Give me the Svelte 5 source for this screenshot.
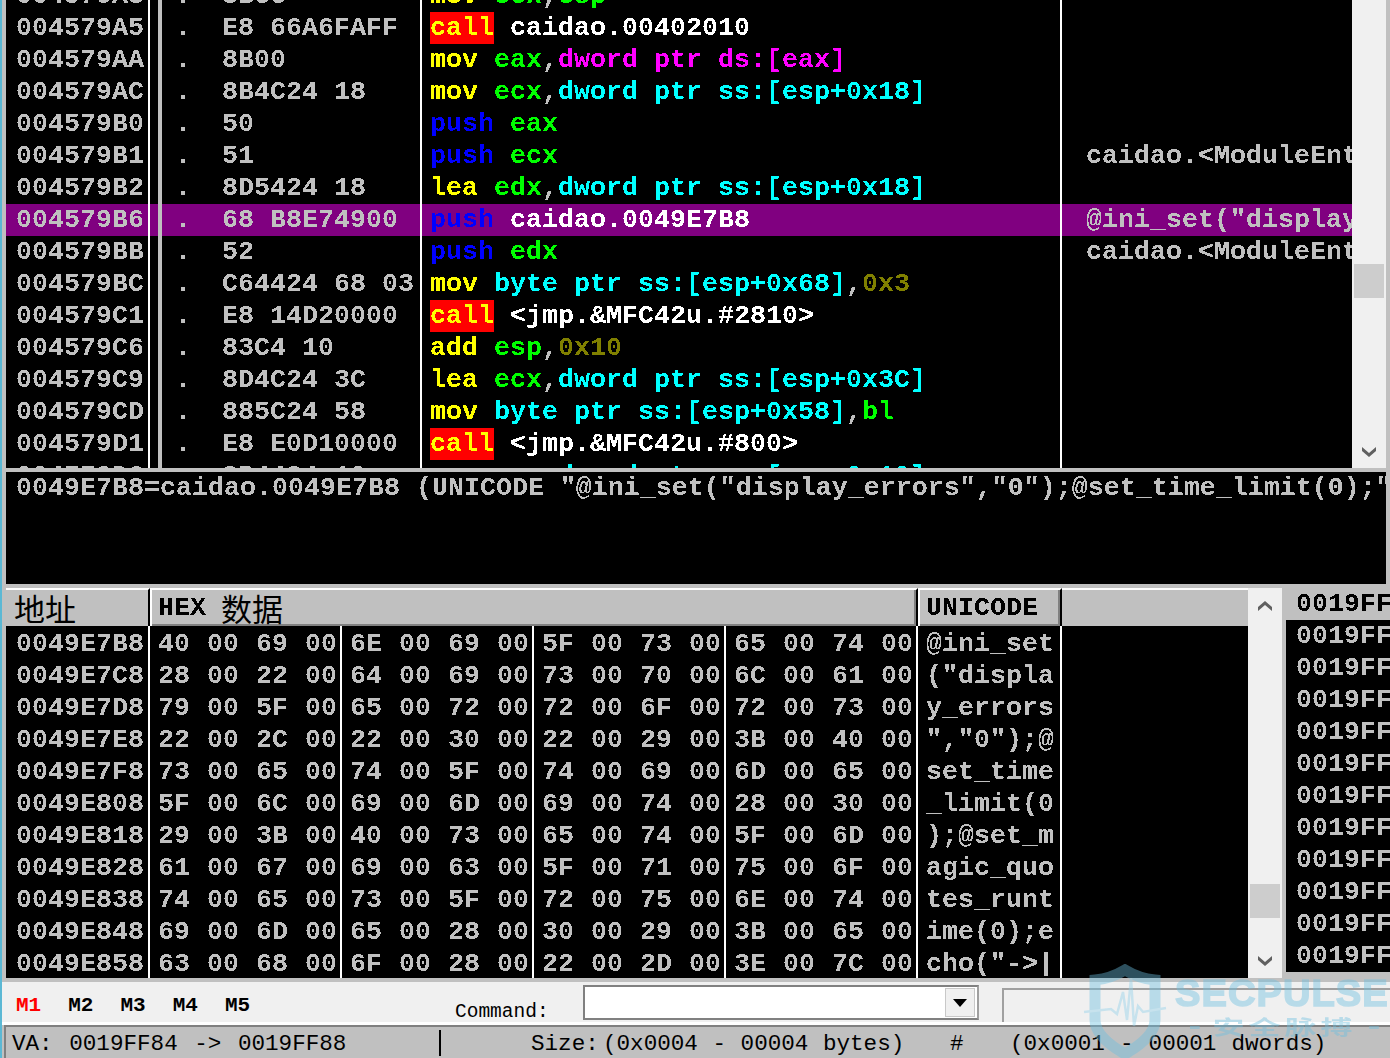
<script>
  const Y = "mn", B = "psh", G = "reg", C = "mem", M = "memd", O = "imm", S = "sep", W = "tgt";

  const asm = [
    { addr: "004579A3", hex: "8BCC", code: [["mov", Y], [" "], ["ecx", G], [",", S], ["esp", G]] },
    { addr: "004579A5", hex: "E8 66A6FAFF", call: true, code: [["caidao.00402010", W]] },
    { addr: "004579AA", hex: "8B00", code: [["mov", Y], [" "], ["eax", G], [",", S], ["dword ptr ds:[eax]", M]] },
    { addr: "004579AC", hex: "8B4C24 18", code: [["mov", Y], [" "], ["ecx", G], [",", S], ["dword ptr ss:[esp+0x18]", C]] },
    { addr: "004579B0", hex: "50", code: [["push", B], [" "], ["eax", G]] },
    { addr: "004579B1", hex: "51", code: [["push", B], [" "], ["ecx", G]], note: "caidao.<ModuleEntryPoint>" },
    { addr: "004579B2", hex: "8D5424 18", code: [["lea", Y], [" "], ["edx", G], [",", S], ["dword ptr ss:[esp+0x18]", C]] },
    { addr: "004579B6", hex: "68 B8E74900", sel: true, code: [["push", B], [" "], ["caidao.0049E7B8", W]], note: "@ini_set(\"display_errors\",\"0\")" },
    { addr: "004579BB", hex: "52", code: [["push", B], [" "], ["edx", G]], note: "caidao.<ModuleEntryPoint>" },
    { addr: "004579BC", hex: "C64424 68 03", code: [["mov", Y], [" "], ["byte ptr ss:[esp+0x68]", C], [",", S], ["0x3", O]] },
    { addr: "004579C1", hex: "E8 14D20000", call: true, code: [["<jmp.&MFC42u.#2810>", W]] },
    { addr: "004579C6", hex: "83C4 10", code: [["add", Y], [" "], ["esp", G], [",", S], ["0x10", O]] },
    { addr: "004579C9", hex: "8D4C24 3C", code: [["lea", Y], [" "], ["ecx", G], [",", S], ["dword ptr ss:[esp+0x3C]", C]] },
    { addr: "004579CD", hex: "885C24 58", code: [["mov", Y], [" "], ["byte ptr ss:[esp+0x58]", C], [",", S], ["bl", G]] },
    { addr: "004579D1", hex: "E8 E0D10000", call: true, code: [["<jmp.&MFC42u.#800>", W]] },
    { addr: "004579D6", hex: "8B4424 10", code: [["mov", Y], [" "], ["eax", G], [",", S], ["dword ptr ss:[esp+0x10]", C]] }
  ];

  const dump = [
    ["0049E7B8", "40 00 69 00", "6E 00 69 00", "5F 00 73 00", "65 00 74 00", "@ini_set"],
    ["0049E7C8", "28 00 22 00", "64 00 69 00", "73 00 70 00", "6C 00 61 00", "(\"displa"],
    ["0049E7D8", "79 00 5F 00", "65 00 72 00", "72 00 6F 00", "72 00 73 00", "y_errors"],
    ["0049E7E8", "22 00 2C 00", "22 00 30 00", "22 00 29 00", "3B 00 40 00", "\",\"0\");@"],
    ["0049E7F8", "73 00 65 00", "74 00 5F 00", "74 00 69 00", "6D 00 65 00", "set_time"],
    ["0049E808", "5F 00 6C 00", "69 00 6D 00", "69 00 74 00", "28 00 30 00", "_limit(0"],
    ["0049E818", "29 00 3B 00", "40 00 73 00", "65 00 74 00", "5F 00 6D 00", ");@set_m"],
    ["0049E828", "61 00 67 00", "69 00 63 00", "5F 00 71 00", "75 00 6F 00", "agic_quo"],
    ["0049E838", "74 00 65 00", "73 00 5F 00", "72 00 75 00", "6E 00 74 00", "tes_runt"],
    ["0049E848", "69 00 6D 00", "65 00 28 00", "30 00 29 00", "3B 00 65 00", "ime(0);e"],
    ["0049E858", "63 00 68 00", "6F 00 28 00", "22 00 2D 00", "3E 00 7C 00", "cho(\"->|"]
  ];

  const stackRows = Array(11).fill("0019FF88");
  const tabs = ["M1", "M2", "M3", "M4", "M5"];
</script>

<svg class="defs" width="0" height="0" aria-hidden="true">
  <filter id="px" x="-2%" y="-5%" width="104%" height="110%" color-interpolation-filters="sRGB">
    <feComponentTransfer>
      <feFuncA type="discrete" tableValues="0 1" />
    </feComponentTransfer>
  </filter>
</svg>

<div class="app">
  <div class="strip"></div>
  <div class="window">
    <div class="top">
      <div class="disasm">
        <div class="asm-list">
          {#each asm as row}
            <div class="asm-row" class:sel={row.sel}>
              <div class="c-addr"><span class="px">{row.addr}</span></div>
              <div class="c-gutter"></div>
              <div class="c-hex"><span class="px dot">.</span><span class="px">{row.hex}</span></div>
              <div class="c-asm">{#if row.call}<span class="call"><span class="px mn">call</span></span><span class="gap"></span>{/if}{#each row.code as t}<span class="px {t[1] || ''}">{t[0]}</span>{/each}</div>
              <div class="c-note"><span class="px">{row.note || ""}</span></div>
            </div>
          {/each}
        </div>
      </div>
      <div class="vscroll">
        <div class="thumb t1"></div>
        <svg class="arrow" width="16" height="12" viewBox="0 0 16 12"><path d="M1 1 L8 7 L15 1 L15 5 L8 11 L1 5 Z" fill="#606060" /></svg>
      </div>
    </div>

    <div class="info"><span class="px">0049E7B8=caidao.0049E7B8 (UNICODE "@ini_set("display_errors","0");@set_time_limit(0);"</span></div>

    <div class="lower">
      <div class="dump">
        <div class="dump-head">
          <div class="h-cell h-addr"><span class="cjk">地址</span></div>
          <div class="h-cell h-hex"><span class="px">HEX</span><span class="cjk">数据</span></div>
          <div class="h-cell h-uni"><span class="px">UNICODE</span></div>
          <div class="h-rest"></div>
        </div>
        {#each dump as r}
          <div class="dump-row">
            <div class="d-addr"><span class="px">{r[0]}</span></div>
            <div class="d-hex"><span class="px">{r[1]}</span></div>
            <div class="d-hex"><span class="px">{r[2]}</span></div>
            <div class="d-hex"><span class="px">{r[3]}</span></div>
            <div class="d-hex"><span class="px">{r[4]}</span></div>
            <div class="d-uni"><span class="px">{r[5]}</span></div>
          </div>
        {/each}
      </div>
      <div class="vscroll small">
        <svg class="arrow" width="16" height="12" viewBox="0 0 16 12"><path d="M1 7 L8 1 L15 7 L15 11 L8 5 L1 11 Z" fill="#606060" /></svg>
        <div class="thumb t2"></div>
        <svg class="arrow" width="16" height="12" viewBox="0 0 16 12"><path d="M1 1 L8 7 L15 1 L15 5 L8 11 L1 5 Z" fill="#606060" /></svg>
      </div>
      <div class="stack">
        <div class="stack-head"><span class="px">0019FF84</span></div>
        {#each stackRows as s}
          <div class="stack-row"><span class="px">{s}</span></div>
        {/each}
      </div>
    </div>

    <div class="toolbar">
      <div class="tabs">
        {#each tabs as t, i}
          <span class="tab" class:on={i === 0}>{t}</span>
        {/each}
      </div>
      <span class="cmd-label">Command:</span>
      <div class="combo">
        <div class="combo-btn"><svg width="14" height="8" viewBox="0 0 14 8"><path d="M0 0 H14 L7 8 Z" fill="#000" /></svg></div>
      </div>
      <div class="cmd-box"></div>
    </div>

    <div class="status">
      <span class="st-va">VA: 0019FF84 -&gt; 0019FF88</span>
      <span class="st-div"></span>
      <span class="st-size"><span class="st-label">Size:</span>(0x0004 - 00004 bytes)</span>
      <span class="st-hash">#</span>
      <span class="st-dw">(0x0001 - 00001 dwords)</span>
    </div>
  </div>

  <div class="watermark" aria-hidden="true">
    <svg class="shield" width="84" height="94" viewBox="0 0 84 94">
      <path d="M42 6 C52 12 60 15 72 16 V56 C72 70 56 82 42 90 C28 82 12 70 12 56 V16 C24 15 32 12 42 6 Z" fill="none" stroke="#6cbfe0" stroke-width="11" />
      <path d="M1 48 L28 45 L34 50 L40 28 L44 56 L48 14 L51 62 L55 42 L60 48 L83 44" fill="none" stroke="#8fd0ea" stroke-width="2.5" />
    </svg>
    <div class="wm-en">SECPULSE</div>
    <div class="wm-cn"><i></i>安全脉搏<i></i></div>
  </div>
</div>

<style>
  :global(body) {
    margin: 0;
    background: #c0c0c0;
  }

  .defs {
    position: absolute;
  }

  .app {
    position: relative;
    display: flex;
    width: 1390px;
    height: 1058px;
    overflow: hidden;
    font-family: "Liberation Mono", monospace;
    font-size: 26.67px;
    font-weight: 700;
    line-height: 32px;
    color: #c0c0c0;
  }

  .strip {
    width: 2px;
    flex: none;
    background: #5bb8d4;
  }

  .window {
    width: 1388px;
    display: flex;
    flex-direction: column;
    background: #c0c0c0;
  }

  .px {
    filter: url(#px);
    white-space: pre;
  }

  /* disassembler */
  .top {
    display: flex;
    height: 468px;
    margin-left: 4px;
    padding-right: 4px;
  }

  .disasm {
    width: 1346px;
    background: #000;
    overflow: hidden;
  }

  .asm-list {
    margin-top: -20px;
  }

  .asm-row {
    display: flex;
    height: 32px;
  }

  .asm-row.sel {
    background: #800080;
  }

  .c-addr {
    width: 144px;
    box-sizing: border-box;
    padding-left: 10px;
    border-right: 2px solid #fff;
  }

  .c-gutter {
    width: 12px;
    box-sizing: border-box;
    border-right: 4px solid #c0c0c0;
  }

  .c-hex {
    width: 260px;
    box-sizing: border-box;
    padding-left: 13px;
    border-right: 2px solid #fff;
  }

  .dot {
    display: inline-block;
    width: 47px;
  }

  .c-asm {
    width: 640px;
    box-sizing: border-box;
    padding-left: 8px;
    border-right: 2px solid #fff;
    color: #fff;
    white-space: nowrap;
  }

  .c-note {
    flex: 1;
    min-width: 0;
    padding-left: 24px;
    overflow: hidden;
    white-space: nowrap;
  }

  .call {
    display: inline-block;
    background: #ff0000;
    height: 32px;
  }

  .gap {
    display: inline-block;
    width: 16px;
  }

  .mn {
    color: #ffff00;
  }

  .psh {
    color: #0000ff;
  }

  .reg {
    color: #00ff00;
  }

  .mem {
    color: #00ffff;
  }

  .memd {
    color: #ff00ff;
  }

  .imm {
    color: #808000;
  }

  .sep {
    color: #c0c0c0;
  }

  .tgt {
    color: #fff;
  }

  /* scrollbars */
  .vscroll {
    width: 34px;
    flex: none;
    display: flex;
    flex-direction: column;
    align-items: center;
    background: #f0f0f0;
  }

  .thumb {
    width: 30px;
    height: 34px;
    flex: none;
    background: #cdcdcd;
  }

  .t1 {
    margin-top: 264px;
    margin-bottom: 148px;
  }

  .vscroll.small .arrow:first-child {
    margin-top: 12px;
  }

  .t2 {
    margin-top: 272px;
    margin-bottom: 37px;
  }

  /* info pane */
  .info {
    height: 112px;
    margin: 4px;
    padding-left: 10px;
    background: #000;
    overflow: hidden;
    white-space: nowrap;
  }

  /* dump */
  .lower {
    display: flex;
    height: 390px;
    margin-left: 4px;
  }

  .dump {
    width: 1242px;
    flex: none;
  }

  .dump-head {
    display: flex;
    height: 38px;
    color: #000;
  }

  .h-cell {
    box-sizing: border-box;
    display: flex;
    align-items: center;
    height: 38px;
    border-top: 2px solid #fff;
  }

  .h-addr {
    width: 144px;
    padding-left: 8px;
    border-right: 2px solid #000;
  }

  .h-hex {
    width: 768px;
    padding-left: 6px;
    border-left: 2px solid #fff;
    border-right: 2px solid #000;
    box-shadow: inset -2px -2px 0 #808080;
  }

  .h-uni {
    width: 144px;
    padding-left: 6px;
    border-left: 2px solid #fff;
    border-right: 2px solid #000;
    box-shadow: inset -2px -2px 0 #808080;
  }

  .h-rest {
    flex: 1;
    border-top: 2px solid #fff;
  }

  .cjk {
    font-family: "Noto Sans CJK SC", sans-serif;
    font-weight: 400;
    font-size: 31px;
    line-height: 36px;
    color: #000;
  }

  .h-hex .cjk {
    margin-left: 15px;
  }

  .dump-row {
    display: flex;
    height: 32px;
    line-height: 36px;
    background: #000;
  }

  .d-addr {
    width: 144px;
    box-sizing: border-box;
    padding-left: 10px;
    border-right: 2px solid #fff;
  }

  .d-hex {
    width: 192px;
    box-sizing: border-box;
    padding-left: 8px;
    border-right: 2px solid #fff;
    word-spacing: 1px;
  }

  .d-uni {
    width: 144px;
    box-sizing: border-box;
    padding-left: 8px;
    border-right: 2px solid #fff;
  }

  /* stack */
  .stack {
    flex: 1;
    min-width: 0;
    margin-left: 4px;
    overflow: hidden;
    white-space: nowrap;
  }

  .stack-head {
    height: 32px;
    padding-left: 10px;
    color: #000;
  }

  .stack-row {
    height: 32px;
    padding-left: 10px;
    background: #000;
  }

  /* toolbar */
  .toolbar {
    display: flex;
    height: 40px;
    margin-top: 4px;
    background: #f0f0f0;
    border-bottom: 3px solid #fff;
    font-size: 20px;
    font-weight: 400;
    line-height: 24px;
    color: #000;
  }

  .tabs {
    display: flex;
    width: 453px;
    padding-left: 14px;
    box-sizing: border-box;
    gap: 27px;
    padding-top: 12px;
    font-size: 21px;
    font-weight: 700;
  }

  .tab.on {
    color: #ff0000;
  }

  .cmd-label {
    width: 128px;
    font-size: 19.5px;
    padding-top: 18px;
  }

  .combo {
    display: flex;
    justify-content: flex-end;
    box-sizing: border-box;
    width: 396px;
    height: 35px;
    margin-top: 3px;
    background: #fff;
    border: 2px solid #808080;
    border-right-color: #a0a0a0;
    padding: 1px 2px 1px 0;
  }

  .combo-btn {
    box-sizing: border-box;
    width: 30px;
    display: flex;
    align-items: center;
    justify-content: center;
    background: #f0f0f0;
    border: 1px solid #c8c8c8;
  }

  .cmd-box {
    flex: 1;
    margin-left: 23px;
    margin-top: 6px;
    border-top: 2px solid #a0a0a0;
    border-left: 2px solid #a0a0a0;
  }

  /* status bar */
  .status {
    display: flex;
    height: 33px;
    box-sizing: border-box;
    margin-left: 2px;
    border-top: 2px solid #808080;
    border-left: 2px solid #808080;
    font-size: 22.6px;
    font-weight: 400;
    line-height: 34px;
    color: #000;
    background: #c0c0c0;
    white-space: nowrap;
  }

  .st-va {
    width: 433px;
    padding-left: 6px;
    box-sizing: border-box;
    word-spacing: 3px;
  }

  .st-div {
    width: 2px;
    height: 26px;
    margin-top: 3px;
    background: #000;
  }

  .st-size {
    margin-left: 90px;
    width: 419px;
    word-spacing: 1px;
  }

  .st-label {
    display: inline-block;
    width: 72px;
  }

  .st-hash {
    width: 60px;
  }

  .st-dw {
    word-spacing: 1.5px;
  }

  /* watermark */
  .watermark {
    position: absolute;
    left: 1083px;
    top: 964px;
    width: 307px;
    height: 94px;
    opacity: 0.42;
    pointer-events: none;
  }

  .shield {
    position: absolute;
    left: 0;
    top: 0;
  }

  .wm-en {
    position: absolute;
    left: 92px;
    top: 12px;
    font-family: "Liberation Sans", sans-serif;
    font-weight: 700;
    font-size: 37px;
    line-height: 36px;
    letter-spacing: 1px;
    color: #6cbfe0;
    -webkit-text-stroke: 1.5px #6cbfe0;
    transform-origin: left top;
    transform: scaleX(1.03);
  }

  .wm-cn {
    position: absolute;
    left: 107px;
    top: 51px;
    display: flex;
    align-items: center;
    gap: 8px;
    font-family: "Noto Sans CJK SC", sans-serif;
    font-weight: 700;
    font-size: 20px;
    line-height: 24px;
    letter-spacing: 2.5px;
    color: #6cbfe0;
    white-space: nowrap;
    transform-origin: left top;
    transform: scaleX(1.6);
  }

  .wm-cn i {
    width: 6px;
    height: 3px;
    background: #6cbfe0;
  }
</style>
